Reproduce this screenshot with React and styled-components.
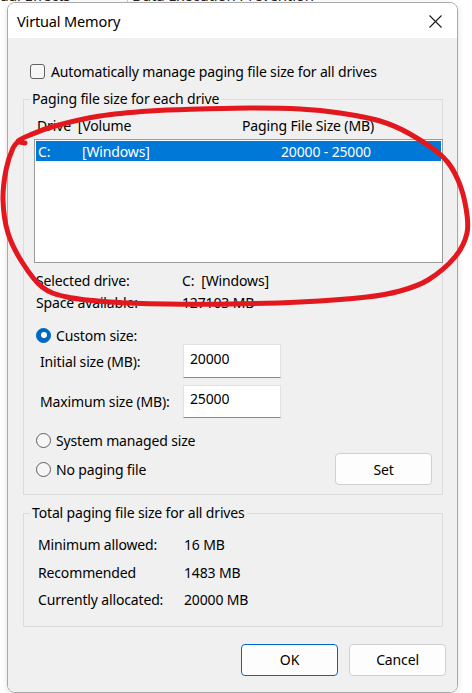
import React from "react";
import styled, { createGlobalStyle } from "styled-components";

const GlobalStyle = createGlobalStyle`
  html, body {
    margin: 0;
    padding: 0;
    background: #ffffff;
  }
  body {
    font-family: "Noto Sans", "Open Sans", "Liberation Sans", sans-serif;
    font-size: 14px;
    letter-spacing: -0.15px;
    color: #000000;
  }
  * {
    box-sizing: border-box;
  }
`;

const drives = [{ drive: "C:", volume: "[Windows]", size: "20000 - 25000" }];

const totals = [
  { label: "Minimum allowed:", value: "16 MB" },
  { label: "Recommended", value: "1483 MB" },
  { label: "Currently allocated:", value: "20000 MB" },
];

// hand drawn red mark, traced from the screenshot
const markPoints = [
  [25, 143], [18, 141], [30, 135], [55, 126], [100, 116], [150, 111],
  [200, 109], [250, 108], [300, 109], [340, 113], [380, 121], [410, 134],
  [443, 157], [458, 180], [466, 208], [467, 233], [455, 257], [428, 280],
  [400, 291], [367, 297], [300, 302], [230, 304], [167, 304], [110, 302],
  [67, 297], [42, 287], [22, 262], [8, 233], [3, 200], [6, 170], [13, 148],
  [20, 140],
];

const toCurve = (pts) => {
  let d = `M${pts[0][0]},${pts[0][1]}`;
  for (let i = 0; i < pts.length - 1; i++) {
    const p0 = pts[i - 1] || pts[i];
    const p1 = pts[i];
    const p2 = pts[i + 1];
    const p3 = pts[i + 2] || p2;
    const c1 = [p1[0] + (p2[0] - p0[0]) / 6, p1[1] + (p2[1] - p0[1]) / 6];
    const c2 = [p2[0] - (p3[0] - p1[0]) / 6, p2[1] - (p3[1] - p1[1]) / 6];
    d += ` C${c1[0].toFixed(1)},${c1[1].toFixed(1)} ${c2[0].toFixed(1)},${c2[1].toFixed(1)} ${p2[0]},${p2[1]}`;
  }
  return d;
};

const Radio = ({ checked, top, children }) => (
  <RadioRow $top={top}>
    <RadioDot $checked={checked} />
    <span>{children}</span>
  </RadioRow>
);

const App = () => {
  return (
    <Page>
      <GlobalStyle />
      <TabStrip>
        <TabLabel $width="148px" $offset="-20px">Visual Effects</TabLabel>
        <TabLabel $width="200px" $offset="4px" $divider>
          Data Execution Prevention
        </TabLabel>
      </TabStrip>
      <Window>
        <TitleBar>
          <Title>Virtual Memory</Title>
          <CloseButton aria-label="Close">
            <svg width="13" height="13" viewBox="0 0 13 13">
              <path
                d="M0.5 0.5 L12.5 12.5 M12.5 0.5 L0.5 12.5"
                stroke="#1a1a1a"
                strokeWidth="1.1"
                fill="none"
              />
            </svg>
          </CloseButton>
        </TitleBar>
        <Body>
          <CheckRow>
            <CheckBox />
            <span>Automatically manage paging file size for all drives</span>
          </CheckRow>

          <Group $top="10px">
            <Legend>Paging file size for each drive</Legend>
            <DriveSection>
              <ListHeader>
                <span>Drive&nbsp;&nbsp;[Volume</span>
                <span>Paging File Size (MB)</span>
              </ListHeader>
              <DriveList>
                {drives.map((d) => (
                  <DriveRow key={d.drive} $selected>
                    <span>{d.drive}</span>
                    <span>{d.volume}</span>
                    <span>{d.size}</span>
                  </DriveRow>
                ))}
              </DriveList>
              <InfoGrid>
                <span>Selected drive:</span>
                <span>C:&nbsp;&nbsp;[Windows]</span>
                <span>Space available:</span>
                <span>127103 MB</span>
              </InfoGrid>
              <Radio checked top="10px">
                Custom size:
              </Radio>
              <SizeGrid>
                <span>Initial size (MB):</span>
                <SizeInput defaultValue="20000" />
                <span>Maximum size (MB):</span>
                <SizeInput defaultValue="25000" />
              </SizeGrid>
              <Radio>System managed size</Radio>
              <SetRow>
                <Radio>No paging file</Radio>
                <Button $width="97px">Set</Button>
              </SetRow>
            </DriveSection>
          </Group>

          <Group $top="8px">
            <Legend>Total paging file size for all drives</Legend>
            <TotalsGrid>
              {totals.map((t) => (
                <React.Fragment key={t.label}>
                  <span>{t.label}</span>
                  <span>{t.value}</span>
                </React.Fragment>
              ))}
            </TotalsGrid>
          </Group>

          <Footer>
            <Button $width="97px" $primary>
              OK
            </Button>
            <Button $width="97px">Cancel</Button>
          </Footer>
        </Body>
      </Window>
      <Mark viewBox="0 0 472 693" width="472" height="693">
        <path
          d={toCurve(markPoints)}
          stroke="#e3181f"
          strokeWidth="5"
          strokeLinecap="round"
          strokeLinejoin="round"
          fill="none"
        />
      </Mark>
    </Page>
  );
};

const Page = styled.div`
  position: relative;
  width: 472px;
  height: 693px;
  overflow: hidden;
  background: #ffffff;
`;

const TabStrip = styled.div`
  display: flex;
  height: 2px;
  overflow: hidden;
`;

const TabLabel = styled.div`
  width: ${({ $width }) => $width};
  padding-left: ${({ $offset }) => $offset};
  margin-left: ${({ $offset }) => ($offset.startsWith("-") ? $offset : "0")};
  margin-top: -12px;
  line-height: 15px;
  font-size: 15px;
  color: #222;
  white-space: nowrap;
  border-right: ${({ $divider }) => ($divider ? "none" : "1px solid #c8c8c8")};
`;

const Window = styled.div`
  margin-left: 7px;
  width: 451px;
  height: 691px;
  border: 1px solid #a9a9a9;
  border-radius: 8px;
  overflow: hidden;
  display: flex;
  flex-direction: column;
  box-shadow: 0 2px 6px rgba(0, 0, 0, 0.12);
`;

const TitleBar = styled.div`
  height: 35px;
  flex-shrink: 0;
  background: #ffffff;
  display: flex;
  align-items: center;
  justify-content: space-between;
  padding: 0 15px 0 9px;
`;

const Title = styled.span`
  font-size: 14.5px;
  color: #000;
  margin-top: 0;
`;

const CloseButton = styled.div`
  display: flex;
  align-items: center;
  margin-top: 1px;
`;

const Body = styled.div`
  flex: 1;
  background: #f0f0f0;
  display: flex;
  flex-direction: column;
  padding: 25px 0 0 0;
`;

const CheckRow = styled.div`
  display: flex;
  align-items: center;
  gap: 6px;
  padding-left: 22px;
  height: 16px;
`;

const CheckBox = styled.span`
  width: 15px;
  height: 15px;
  border: 1px solid #616161;
  border-radius: 3px;
  background: #f6f6f6;
  flex-shrink: 0;
`;

const Group = styled.fieldset`
  margin: ${({ $top }) => $top} 14px 0 15px;
  padding: 0;
  border: 1px solid #dcdcdc;
  min-width: 0;
`;

const Legend = styled.legend`
  margin-left: 6px;
  padding: 0 2px;
  line-height: 20px;
  font-size: 14px;
`;

const DriveSection = styled.div`
  display: flex;
  flex-direction: column;
  padding: 6px 0 9px 0;
`;

const ListHeader = styled.div`
  display: flex;
  padding-left: 13px;
  height: 20px;
  align-items: center;
  & > span:first-child {
    width: 205px;
  }
`;

const DriveList = styled.div`
  margin: 4px -1px 0 10px;
  height: 124px;
  background: #ffffff;
  border: 1px solid #9a9a9a;
  padding: 1px;
`;

const DriveRow = styled.div`
  display: grid;
  grid-template-columns: 44px 199px auto;
  height: 20px;
  align-items: center;
  padding-left: 2px;
  background: ${({ $selected }) => ($selected ? "#0078d7" : "transparent")};
  color: ${({ $selected }) => ($selected ? "#ffffff" : "#000")};
`;

const InfoGrid = styled.div`
  display: grid;
  grid-template-columns: 146px auto;
  grid-auto-rows: 22px;
  align-items: center;
  padding-left: 12px;
  margin-top: 6px;
`;

const RadioRow = styled.div`
  display: flex;
  align-items: center;
  gap: 5px;
  height: 24px;
  padding-left: 12px;
  margin-top: ${({ $top }) => $top || "0"};
`;

const RadioDot = styled.span`
  width: 15px;
  height: 15px;
  border-radius: 50%;
  flex-shrink: 0;
  background: ${({ $checked }) => ($checked ? "#0067c0" : "#f6f6f6")};
  border: 1px solid ${({ $checked }) => ($checked ? "#0067c0" : "#5f5f5f")};
  display: flex;
  align-items: center;
  justify-content: center;
  &::after {
    content: "";
    display: ${({ $checked }) => ($checked ? "block" : "none")};
    width: 6px;
    height: 6px;
    border-radius: 50%;
    background: #ffffff;
  }
`;

const SizeGrid = styled.div`
  display: grid;
  grid-template-columns: 143px 98px;
  row-gap: 7px;
  align-items: center;
  padding-left: 16px;
  margin: -3px 0 10px 0;
`;

const SizeInput = styled.input`
  width: 98px;
  height: 34px;
  font: inherit;
  letter-spacing: inherit;
  color: #000;
  background: #ffffff;
  border: 1px solid #e2e2e2;
  border-bottom-color: #8a8a8a;
  padding: 0 6px 6px 6px;
  outline: none;
  &:last-child {
    height: 33px;
  }
`;

const SetRow = styled.div`
  display: flex;
  align-items: center;
  justify-content: space-between;
  padding-right: 10px;
  margin-top: 1px;
`;

const Button = styled.button`
  width: ${({ $width }) => $width};
  height: 32px;
  font: inherit;
  letter-spacing: inherit;
  color: #000;
  background: #fdfdfd;
  border: 1px solid ${({ $primary }) => ($primary ? "#0067c0" : "#d0d0d0")};
  border-radius: 4px;
  padding: 0;
`;

const TotalsGrid = styled.div`
  display: grid;
  grid-template-columns: 146px auto;
  grid-auto-rows: 27.5px;
  align-items: center;
  padding: 8px 0 12px 14px;
`;

const Footer = styled.div`
  display: flex;
  justify-content: flex-end;
  gap: 11px;
  padding-right: 11px;
  margin-top: 17px;
`;

const Mark = styled.svg`
  position: absolute;
  left: 0;
  top: 0;
  pointer-events: none;
`;

export default App;
